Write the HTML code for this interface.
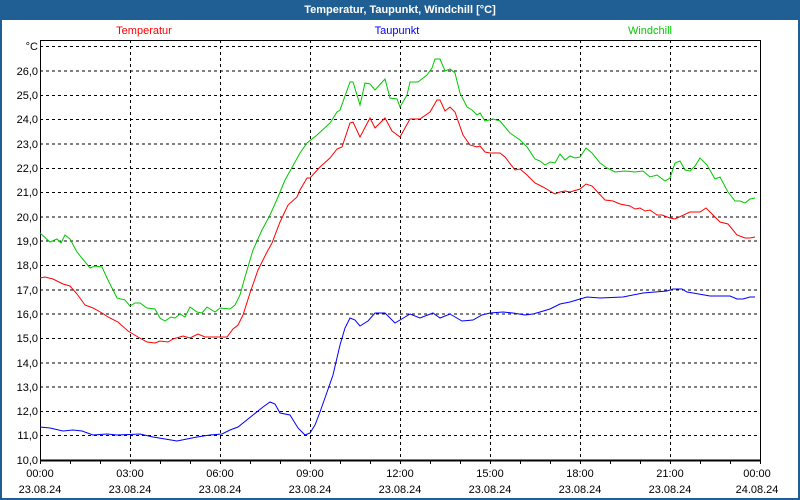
<!DOCTYPE html>
<html><head><meta charset="utf-8"><style>
html,body{margin:0;padding:0;background:#fff}
#w{position:relative;width:800px;height:500px;overflow:hidden;background:#fff;box-sizing:border-box;border:2px solid #1f5f94;border-top:none;font-family:"Liberation Sans",sans-serif}
#t{position:absolute;left:-2px;top:0;width:800px;height:20px;background:#1f5f94;color:#fff;font-weight:bold;font-size:11px;line-height:20px;text-align:center}
svg{position:absolute;left:-2px;top:0}
</style></head><body><div id="w">
<div id="t">Temperatur, Taupunkt, Windchill [°C]</div>
<svg width="800" height="500" font-family="Liberation Sans, sans-serif" font-size="11">
<text x="144" y="34" fill="#f00" text-anchor="middle">Temperatur</text>
<text x="397" y="34" fill="#00f" text-anchor="middle">Taupunkt</text>
<text x="650" y="34" fill="#0c0" text-anchor="middle">Windchill</text>
<g stroke="#000" stroke-width="1" stroke-dasharray="3,3" shape-rendering="crispEdges">
<path d="M40 46.5H760M40 71H760M40 95.5H760M40 119.5H760M40 144H760M40 168.5H760M40 192.5H760M40 217H760M40 241H760M40 265.5H760M40 290H760M40 314H760M40 338.5H760M40 363H760M40 387H760M40 411.5H760M40 435.5H760"/>
<path d="M130.5 40V460M220.5 40V460M310.5 40V460M400.5 40V460M490.5 40V460M580.5 40V460M670.5 40V460"/>
</g>
<g stroke="#000" fill="none" shape-rendering="crispEdges">
<rect x="40.5" y="40.5" width="720" height="419.5"/>
<path d="M40 460.5H760" stroke-width="2"/>
<path d="M70.5 460V464M100.5 460V464M130.5 460V464M160.5 460V464M190.5 460V464M220.5 460V464M250.5 460V464M280.5 460V464M310.5 460V464M340.5 460V464M370.5 460V464M400.5 460V464M430.5 460V464M460.5 460V464M490.5 460V464M520.5 460V464M550.5 460V464M580.5 460V464M610.5 460V464M640.5 460V464M670.5 460V464M700.5 460V464M730.5 460V464M760.5 460V464M40.5 460V464"/>
</g>
<g text-anchor="end" fill="#000">
<text x="38" y="50">°C</text><text x="38" y="75">26,0</text><text x="38" y="99">25,0</text><text x="38" y="123">24,0</text><text x="38" y="148">23,0</text><text x="38" y="172">22,0</text><text x="38" y="196">21,0</text><text x="38" y="221">20,0</text><text x="38" y="245">19,0</text><text x="38" y="269">18,0</text><text x="38" y="294">17,0</text><text x="38" y="318">16,0</text><text x="38" y="342">15,0</text><text x="38" y="367">14,0</text><text x="38" y="391">13,0</text><text x="38" y="415">12,0</text><text x="38" y="439">11,0</text><text x="38" y="464">10,0</text>
</g>
<g text-anchor="middle" fill="#000">
<text x="40" y="477">00:00</text><text x="130" y="477">03:00</text><text x="220" y="477">06:00</text><text x="310" y="477">09:00</text><text x="400" y="477">12:00</text><text x="490" y="477">15:00</text><text x="580" y="477">18:00</text><text x="670" y="477">21:00</text><text x="757" y="477">00:00</text>
<text x="40" y="493">23.08.24</text><text x="130" y="493">23.08.24</text><text x="220" y="493">23.08.24</text><text x="310" y="493">23.08.24</text><text x="400" y="493">23.08.24</text><text x="490" y="493">23.08.24</text><text x="580" y="493">23.08.24</text><text x="670" y="493">23.08.24</text><text x="757" y="493">24.08.24</text>
</g>
<g fill="none" stroke-width="1">
<polyline stroke="#00c800" points="40,233 50,242 57,239 61,243 65,235 70,239 77,252 90,268 95,266 102,267 107,278 117,298 125,300 130,306 135,303 140,303 147,308 155,309 160,318 165,321 171,317 175,318 180,314 185,317 190,307 197,312 202,313 207,307 215,312 220,308 230,309 235,305 240,295 245,277 253,250 262,230 270,215 278,197 285,180 300,153 307,143 317,135 330,123 337,112 340,110 350,82 353,82 360,105 365,83 370,84 375,90 385,79 390,98 397,99 400,107 407,95 410,82 418,82 427,75 432,68 435,59 440,59 445,71 450,69 455,73 460,93 467,107 472,110 477,115 480,113 485,121 493,119 500,121 510,133 520,140 527,147 535,159 540,161 545,165 550,162 555,163 560,154 565,160 570,156 575,158 580,157 586,148 592,153 600,163 607,168 615,172 625,171 635,172 643,171 650,177 657,175 665,181 670,178 675,163 680,161 685,170 690,171 695,166 700,158 707,165 715,179 720,177 728,192 735,201 740,201 745,203 750,199 755,198"/>
<polyline stroke="#f00" points="40,278 45,277 53,279 63,284 70,286 77,294 85,305 93,308 102,313 108,317 118,322 128,331 138,337 147,342 155,343 160,341 168,342 173,339 183,336 190,338 198,334 205,337 220,337 227,337 233,329 238,325 243,315 250,293 258,270 267,252 272,243 280,222 288,205 297,197 300,190 307,178 310,178 320,167 330,158 337,149 342,147 350,123 353,122 360,137 370,118 375,128 385,118 392,131 400,137 410,119 420,119 430,112 437,100 440,100 445,111 450,107 455,112 463,135 470,145 477,147 480,146 485,152 490,153 500,153 505,157 515,170 520,169 527,175 535,183 543,187 555,194 560,192 565,191 570,192 580,189 586,184 592,186 605,200 613,201 620,204 630,206 635,209 640,208 645,211 650,210 657,215 662,215 670,218 675,219 690,212 700,212 706,208 713,215 720,222 728,224 737,235 745,238 750,238 755,237"/>
<polyline stroke="#00f" points="40,427 50,428 63,431 73,430 82,431 93,435 107,434 117,435 140,434 153,437 165,439 177,441 187,439 197,437 210,435 222,434 230,430 238,427 253,415 263,407 270,402 275,404 280,413 290,415 298,428 305,435 310,433 315,425 320,412 326,395 333,375 340,345 345,328 350,318 355,320 360,326 368,321 375,313 385,313 395,323 410,314 420,318 433,313 440,318 450,314 462,321 473,320 482,315 490,313 503,312 513,313 525,315 533,314 540,312 550,309 560,304 570,302 580,299 587,297 600,298 623,297 643,293 667,291 673,289 682,289 687,292 693,293 710,296 730,296 737,299 743,299 750,297 755,297"/>
</g>
</svg>
</div></body></html>
